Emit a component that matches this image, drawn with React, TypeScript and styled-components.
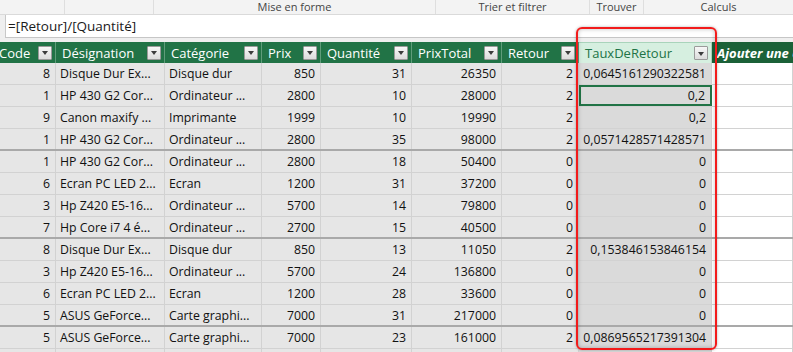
import { FC } from 'react';
import styled, { createGlobalStyle, css } from 'styled-components';

const GREEN = '#217346';
const COLUMNS = '63px 109px 97px 59px 91px 90px 77px 133px 1fr';

const GlobalStyle = createGlobalStyle`
  html, body {
    margin: 0;
    padding: 0;
    background: #ffffff;
  }
  body {
    font-family: 'Open Sans', 'Noto Sans', sans-serif;
    overflow: hidden;
  }
`;

const Page = styled.div`
  position: relative;
  width: 793px;
  height: 352px;
  overflow: hidden;
  background: #efefef;
`;

const Ribbon = styled.div`
  display: grid;
  grid-template-columns: 65px 89px 282px 154px 54px 1fr;
  height: 14px;
  background: #f3f3f3;
  border-bottom: 1px solid #dadada;
`;

const RibbonGroup = styled.div`
  border-right: 1px solid #dedede;
  color: #444444;
  font-size: 11px;
  line-height: 13px;
  text-align: center;
  white-space: nowrap;

  &:last-child {
    border-right: none;
  }
`;

const FormulaBar = styled.div`
  display: flex;
  align-items: center;
  height: 22px;
  margin-left: 5px;
  padding-left: 2px;
  background: #ffffff;
  border-left: 1px solid #c8c8c8;
  border-bottom: 1px solid #c6c6c6;
  font-size: 13.5px;
  color: #1a1a1a;
`;

const Spacer = styled.div`
  height: 4px;
`;

const Grid = styled.div`
  margin-left: -7px;
`;

const Row = styled.div<{ $groupEnd?: boolean }>`
  display: grid;
  grid-template-columns: ${COLUMNS};
  height: 22px;
  box-sizing: border-box;
  border-bottom: ${({ $groupEnd }) =>
    $groupEnd ? '2px solid #a9a9a9' : '1px solid #d2d2d2'};
`;

const HeaderRow = styled.div`
  display: grid;
  grid-template-columns: ${COLUMNS};
  height: 21px;
  box-sizing: border-box;
  background: ${GREEN};
`;

const HeaderCell = styled.div<{ $active?: boolean; $add?: boolean }>`
  display: flex;
  align-items: center;
  justify-content: space-between;
  padding: 0 3px 0 6px;
  border-right: 1px solid #5f9c7a;
  color: #ffffff;
  font-size: 13px;
  white-space: nowrap;
  overflow: hidden;

  ${({ $active }) =>
    $active &&
    css`
      background: #d6efe0;
      color: ${GREEN};
      border-right: 1px solid #a9d4bb;
      border-top: 1px solid #a9d4bb;
    `}

  ${({ $add }) =>
    $add &&
    css`
      background: #1b6138;
      font-weight: 700;
      font-style: italic;
      justify-content: flex-start;
      padding-left: 5px;
      border-right: none;
    `}
`;

const FilterButton = styled.span`
  display: flex;
  align-items: center;
  justify-content: center;
  flex-shrink: 0;
  width: 12px;
  height: 12px;
  border: 1px solid #9a9a9a;
  border-radius: 1px;
  background: linear-gradient(#f7f7f7, #dcdcdc);

  &::after {
    content: '';
    border-left: 3.5px solid transparent;
    border-right: 3.5px solid transparent;
    border-top: 4px solid #3c3c3c;
    margin-top: 1px;
  }
`;

const Cell = styled.div<{ $num?: boolean; $active?: boolean; $add?: boolean; $selected?: boolean }>`
  display: flex;
  align-items: center;
  justify-content: ${({ $num }) => ($num ? 'flex-end' : 'flex-start')};
  padding: ${({ $num }) => ($num ? '0 5px 0 0' : '0 0 0 4px')};
  box-sizing: border-box;
  background: ${({ $active, $add }) => ($add ? '#ffffff' : $active ? '#dadada' : '#e6e6e6')};
  border-right: 1px solid #d2d2d2;
  color: #111111;
  font-size: 12.3px;
  white-space: nowrap;
  overflow: hidden;

  ${({ $selected }) =>
    $selected &&
    css`
      outline: 2px solid ${GREEN};
      outline-offset: -2px;
      padding-right: 6px;
    `}
`;

const Highlight = styled.div`
  position: absolute;
  left: 576px;
  top: 27px;
  width: 137px;
  height: 319px;
  border: 2px solid #f21b1b;
  border-radius: 6px;
  box-shadow: 0 0 3px rgba(0, 0, 0, 0.3), inset 0 0 4px rgba(0, 0, 0, 0.25);
  pointer-events: none;
`;

type Item = {
  code: number;
  name: string;
  category: string;
  price: number;
  qty: number;
  total: number;
  ret: number;
  rate: string;
};

const ITEMS: Item[] = [
  { code: 8, name: 'Disque Dur Ex...', category: 'Disque dur', price: 850, qty: 31, total: 26350, ret: 2, rate: '0,0645161290322581' },
  { code: 1, name: 'HP 430 G2 Cor...', category: 'Ordinateur ...', price: 2800, qty: 10, total: 28000, ret: 2, rate: '0,2' },
  { code: 9, name: 'Canon maxify ...', category: 'Imprimante', price: 1999, qty: 10, total: 19990, ret: 2, rate: '0,2' },
  { code: 1, name: 'HP 430 G2 Cor...', category: 'Ordinateur ...', price: 2800, qty: 35, total: 98000, ret: 2, rate: '0,0571428571428571' },
  { code: 1, name: 'HP 430 G2 Cor...', category: 'Ordinateur ...', price: 2800, qty: 18, total: 50400, ret: 0, rate: '0' },
  { code: 6, name: 'Ecran PC LED 2...', category: 'Ecran', price: 1200, qty: 31, total: 37200, ret: 0, rate: '0' },
  { code: 3, name: 'Hp Z420 E5-16...', category: 'Ordinateur ...', price: 5700, qty: 14, total: 79800, ret: 0, rate: '0' },
  { code: 7, name: 'Hp Core i7 4 é...', category: 'Ordinateur ...', price: 2700, qty: 15, total: 40500, ret: 0, rate: '0' },
  { code: 8, name: 'Disque Dur Ex...', category: 'Disque dur', price: 850, qty: 13, total: 11050, ret: 2, rate: '0,153846153846154' },
  { code: 3, name: 'Hp Z420 E5-16...', category: 'Ordinateur ...', price: 5700, qty: 24, total: 136800, ret: 0, rate: '0' },
  { code: 6, name: 'Ecran PC LED 2...', category: 'Ecran', price: 1200, qty: 28, total: 33600, ret: 0, rate: '0' },
  { code: 5, name: 'ASUS GeForce...', category: 'Carte graphi...', price: 7000, qty: 31, total: 217000, ret: 0, rate: '0' },
  { code: 5, name: 'ASUS GeForce...', category: 'Carte graphi...', price: 7000, qty: 23, total: 161000, ret: 2, rate: '0,0869565217391304' },
];

const HEADERS = ['Code', 'Désignation', 'Catégorie', 'Prix', 'Quantité', 'PrixTotal', 'Retour'];

const App: FC = () => (
  <Page>
    <GlobalStyle />
    <Ribbon>
      <RibbonGroup />
      <RibbonGroup />
      <RibbonGroup>Mise en forme</RibbonGroup>
      <RibbonGroup>Trier et filtrer</RibbonGroup>
      <RibbonGroup>Trouver</RibbonGroup>
      <RibbonGroup>Calculs</RibbonGroup>
    </Ribbon>
    <FormulaBar>=[Retour]/[Quantité]</FormulaBar>
    <Spacer />
    <Grid>
      <HeaderRow>
        {HEADERS.map((h) => (
          <HeaderCell key={h}>
            {h}
            <FilterButton />
          </HeaderCell>
        ))}
        <HeaderCell $active>
          TauxDeRetour
          <FilterButton />
        </HeaderCell>
        <HeaderCell $add>Ajouter une colonne</HeaderCell>
      </HeaderRow>
      {ITEMS.map((item, i) => (
        <Row key={i} $groupEnd={i % 4 === 3}>
          <Cell $num>{item.code}</Cell>
          <Cell>{item.name}</Cell>
          <Cell>{item.category}</Cell>
          <Cell $num>{item.price}</Cell>
          <Cell $num>{item.qty}</Cell>
          <Cell $num>{item.total}</Cell>
          <Cell $num>{item.ret}</Cell>
          <Cell $num $active $selected={i === 1}>
            {item.rate}
          </Cell>
          <Cell $add />
        </Row>
      ))}
      {/* next row, only its top edge is in view */}
      <Row>
        {Array.from({ length: 7 }, (_, c) => (
          <Cell key={c} />
        ))}
        <Cell $active />
        <Cell $add />
      </Row>
    </Grid>
    <Highlight />
  </Page>
);

export default App;
